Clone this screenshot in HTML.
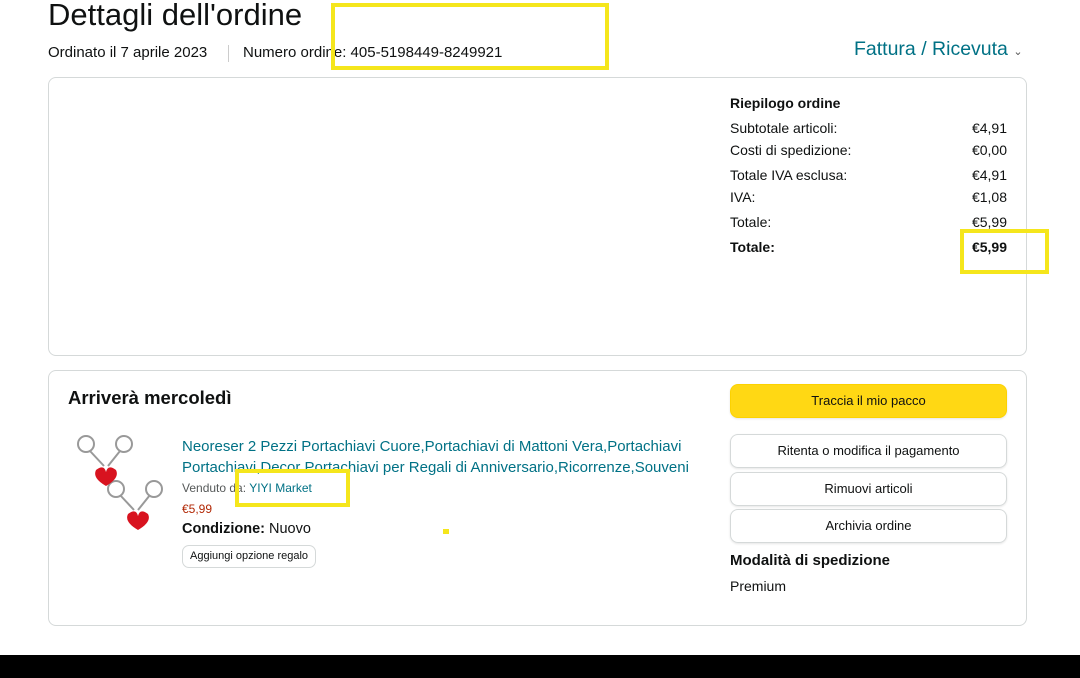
<!DOCTYPE html>
<html><head><meta charset="utf-8"><style>
*{margin:0;padding:0;box-sizing:border-box}
body{width:1080px;height:678px;background:#fff;position:relative;overflow:hidden;font-family:"Liberation Sans Narrow","Liberation Sans",sans-serif;color:#0f1111}
.a{position:absolute;white-space:nowrap}
.box{position:absolute;border:1px solid #d5d9d9;border-radius:8px}
.btn{position:absolute;left:730px;width:277px;height:34px;border:1px solid #d5d9d9;border-radius:8px;font-size:13px;text-align:center;line-height:32px;box-shadow:0 1px 2px rgba(0,0,0,.1)}
.y{position:absolute;border:4px solid #f5e61c}
.r{position:absolute;left:730px;width:277px;font-size:14px;display:flex;justify-content:space-between}
</style></head><body>
<div class="a" style="left:48px;top:-3px;font-size:31px">Dettagli dell'ordine</div>
<div class="a" style="left:48px;top:44px;font-size:15px">Ordinato il 7 aprile 2023</div>
<div class="a" style="left:228px;top:45px;width:1px;height:17px;background:#ccc"></div>
<div class="a" style="left:243px;top:44px;font-size:15px">Numero ordine: 405-5198449-8249921</div>
<div class="a" style="left:854px;top:38px;font-size:19.5px;color:#007185">Fattura / Ricevuta <span style="font-size:11px;color:#555">⌄</span></div>
<div class="box" style="left:48px;top:77px;width:979px;height:279px"></div>
<div class="a" style="left:730px;top:95px;font-size:14px;font-weight:bold">Riepilogo ordine</div>
<div class="r" style="top:120px"><span>Subtotale articoli:</span><span>€4,91</span></div>
<div class="r" style="top:142px"><span>Costi di spedizione:</span><span>€0,00</span></div>
<div class="r" style="top:167px"><span>Totale IVA esclusa:</span><span>€4,91</span></div>
<div class="r" style="top:189px"><span>IVA:</span><span>€1,08</span></div>
<div class="r" style="top:214px"><span>Totale:</span><span>€5,99</span></div>
<div class="r" style="top:239px;font-weight:bold"><span>Totale:</span><span>€5,99</span></div>
<div class="box" style="left:48px;top:370px;width:979px;height:256px"></div>
<div class="a" style="left:68px;top:387px;font-size:18.5px;font-weight:bold">Arriverà mercoledì</div>
<div class="btn" style="top:384px;background:#ffd814;border-color:#fcd200">Traccia il mio pacco</div>
<div class="btn" style="top:434px">Ritenta o modifica il pagamento</div>
<div class="btn" style="top:472px">Rimuovi articoli</div>
<div class="btn" style="top:509px">Archivia ordine</div>
<div class="a" style="left:730px;top:552px;font-size:15px;font-weight:bold">Modalità di spedizione</div>
<div class="a" style="left:730px;top:578px;font-size:14px">Premium</div>
<svg class="a" style="left:72px;top:432px" width="100" height="100" viewBox="0 0 100 100">
<g fill="none" stroke="#999" stroke-width="2"><circle cx="14" cy="12" r="8"/><circle cx="52" cy="12" r="8"/><circle cx="44" cy="57" r="8"/><circle cx="82" cy="57" r="8"/><path d="M18 19L32 34M48 19L36 34M48 63L62 78M78 63L66 78"/></g>
<path d="M24 38q8-6 10 2q2-8 10-2q4 8-10 16q-14-8-10-16z" fill="#d8131f"/>
<path d="M56 82q8-6 10 2q2-8 10-2q4 8-10 16q-14-8-10-16z" fill="#d8131f"/></svg>
<div class="a" style="left:182px;top:436px;font-size:15px;color:#007185;line-height:21px">Neoreser 2 Pezzi Portachiavi Cuore,Portachiavi di Mattoni Vera,Portachiavi<br>Portachiavi,Decor Portachiavi per Regali di Anniversario,Ricorrenze,Souveni</div>
<div class="a" style="left:182px;top:481px;font-size:12px;color:#565959">Venduto da: <span style="color:#007185">YIYI Market</span></div>
<div class="a" style="left:182px;top:502px;font-size:12px;color:#b12704">€5,99</div>
<div class="a" style="left:182px;top:521px;font-size:14.5px"><b>Condizione:</b> Nuovo</div>
<div class="a" style="left:182px;top:545px;height:23px;padding:0 7px;border:1px solid #d5d9d9;border-radius:7px;font-size:11px;line-height:21px">Aggiungi opzione regalo</div>
<div class="y" style="left:331px;top:3px;width:278px;height:67px"></div>
<div class="y" style="left:960px;top:229px;width:89px;height:45px"></div>
<div class="y" style="left:235px;top:469px;width:115px;height:38px"></div>
<div class="a" style="left:443px;top:529px;width:6px;height:5px;background:#f5e61c"></div>
<div class="a" style="left:0;top:655px;width:1080px;height:23px;background:#000"></div>
</body></html>
